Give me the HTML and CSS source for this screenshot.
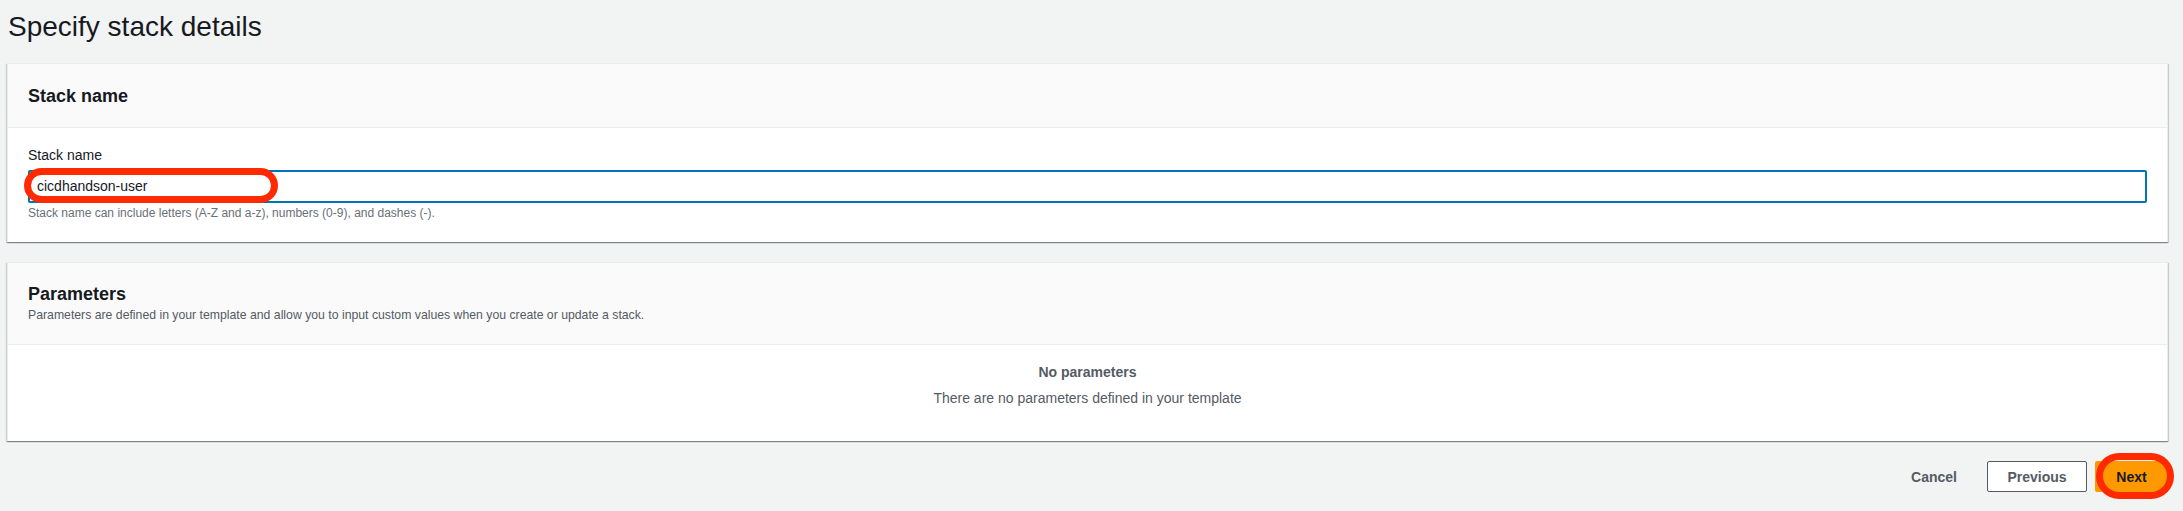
FILE: index.html
```html
<!DOCTYPE html>
<html>
<head>
<meta charset="utf-8">
<link rel="stylesheet" href="styles.css">
</head>
<body>
<div class="page">
  <h1 class="title">Specify stack details</h1>
  <section class="card card-stack">
    <div class="card-header">
      <h2 class="card-title">Stack name</h2>
    </div>
    <div class="card-body">
      <label class="field-label">Stack name</label>
      <div class="input-wrap">
        <div class="input">cicdhandson-user</div>
        <span class="mark mark-input"></span>
      </div>
      <div class="hint">Stack name can include letters (A-Z and a-z), numbers (0-9), and dashes (-).</div>
    </div>
  </section>
  <section class="card card-params">
    <div class="card-header params-header">
      <h2 class="card-title">Parameters</h2>
      <div class="card-desc">Parameters are defined in your template and allow you to input custom values when you create or update a stack.</div>
    </div>
    <div class="card-body empty">
      <div class="empty-title">No parameters</div>
      <div class="empty-text">There are no parameters defined in your template</div>
    </div>
  </section>
  <div class="actions">
    <button class="btn btn-link">Cancel</button>
    <button class="btn btn-normal">Previous</button>
    <div class="next-wrap">
      <button class="btn btn-primary">Next</button>
      <span class="mark mark-next"></span>
    </div>
  </div>
</div>
</body>
</html>
```

FILE: styles.css
```css
* { box-sizing: border-box; }
html, body { margin: 0; padding: 0; }
body {
  background: #f2f3f3;
  font-family: "Liberation Sans", Arial, sans-serif;
  color: #16191f;
  width: 2183px;
  height: 511px;
  overflow: hidden;
}
.page {
  padding: 0 15px 0 7px;
}
.title {
  margin: 0;
  padding: 7px 0 0 1px;
  height: 63px;
  font-size: 28px;
  font-weight: 400;
  line-height: 40px;
  color: #16191f;
}
.card {
  background: #fff;
  border: 1px solid #eaeded;
  border-bottom: none;
  box-shadow: 0 1px 1px 0 rgba(0,28,36,.35), 1px 1px 1px 0 rgba(0,28,36,.12), -1px 1px 1px 0 rgba(0,28,36,.12);
}
.card-header {
  background: #fafafa;
  border-bottom: 1px solid #eaeded;
  padding: 0 20px;
  height: 64px;
  display: flex;
  flex-direction: column;
  justify-content: center;
}
.card-title {
  margin: 0;
  font-size: 18px;
  font-weight: 700;
  line-height: 24px;
}
.card-body {
  padding: 16px 20px 0;
}
.card-stack .card-body { height: 114px; }
.field-label {
  display: block;
  font-size: 14px;
  line-height: 22px;
  color: #16191f;
}
.input-wrap {
  position: relative;
  margin-top: 4px;
}
.input {
  height: 33px;
  border: 2px solid #0073bb;
  border-radius: 2px;
  padding: 0 7px;
  font-size: 14px;
  line-height: 29px;
  color: #16191f;
}
.mark {
  position: absolute;
  border: 7px solid #ff2a00;
  pointer-events: none;
}
.mark-input {
  left: -4px;
  top: -2px;
  width: 254px;
  height: 35px;
  border-radius: 18px;
}
.hint {
  margin-top: 2px;
  font-size: 12px;
  line-height: 16px;
  color: #687078;
}
.card-params { margin-top: 20px; }
.params-header {
  height: auto;
  display: block;
  padding: 19px 20px 20px;
}
.card-desc {
  font-size: 12.25px;
  line-height: 18px;
  color: #545b64;
}
.card-body.empty {
  height: 96px;
  padding-top: 16px;
  text-align: center;
}
.empty-title {
  font-size: 14px;
  font-weight: 700;
  line-height: 22px;
  color: #545b64;
}
.empty-text {
  margin-top: 4px;
  font-size: 14px;
  line-height: 22px;
  color: #545b64;
}
.actions {
  display: flex;
  justify-content: flex-end;
  align-items: center;
  margin-top: 20px;
}
.btn {
  font-family: inherit;
  font-size: 14px;
  font-weight: 700;
  height: 31px;
  border-radius: 2px;
  cursor: pointer;
}
.btn-link {
  background: none;
  border: none;
  color: #545b64;
  padding: 0 20px;
  margin-right: 10px;
}
.btn-normal {
  background: #fff;
  border: 1px solid #545b64;
  color: #545b64;
  width: 100px;
}
.next-wrap {
  position: relative;
  margin-left: 8px;
}
.btn-primary {
  display: block;
  background: #ff9900;
  border: none;
  color: #16191f;
  width: 73px;
}
.mark-next {
  left: 1px;
  top: -8px;
  width: 78px;
  height: 46px;
  border-radius: 23px;
}
```
